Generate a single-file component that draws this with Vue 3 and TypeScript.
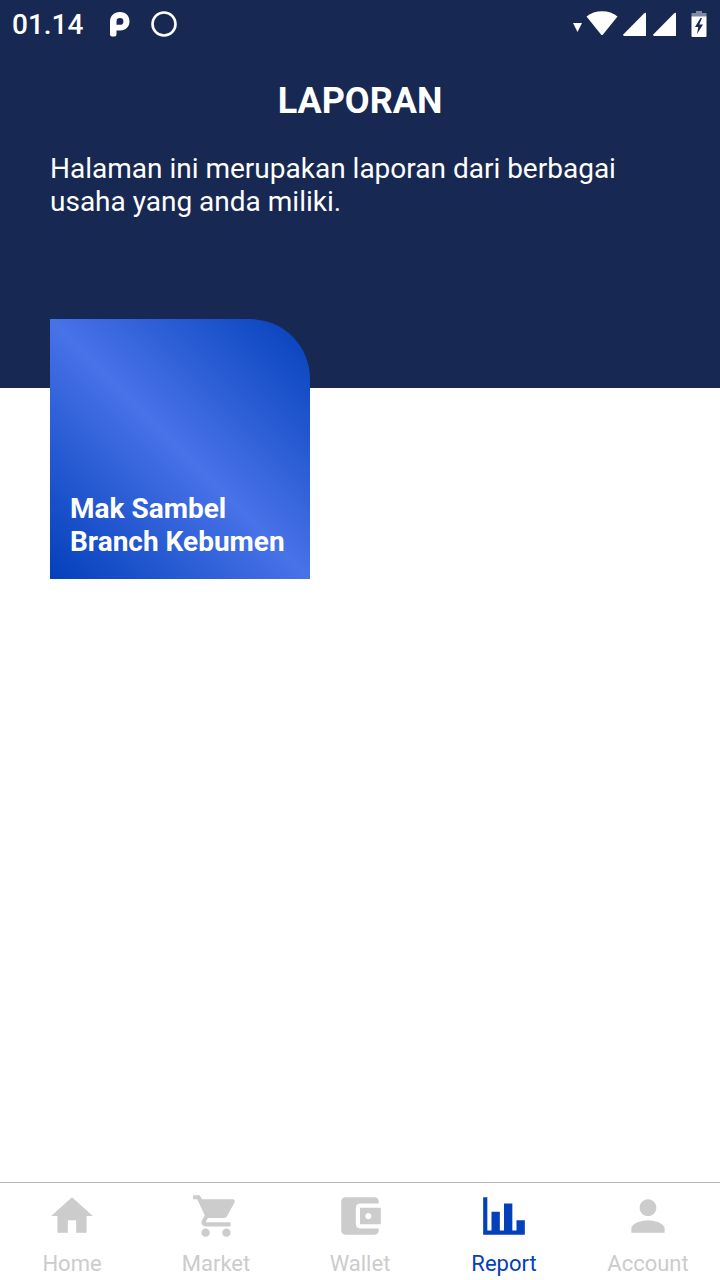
<script setup lang="ts">
interface Tab {
  label: string
  href: string
  icon: string
  active?: boolean
}

interface Business {
  name: string
  branch: string
}

const businesses: Business[] = [{ name: 'Mak Sambel', branch: 'Branch Kebumen' }]

const tabs: Tab[] = [
  { label: 'Home', href: '#home', icon: 'M10 20v-6h4v6h5v-8h3L12 3 2 12h3v8z' },
  {
    label: 'Market',
    href: '#market',
    icon: 'M7 18c-1.1 0-1.99.9-1.99 2S5.9 22 7 22s2-.9 2-2-.9-2-2-2zM1 2v2h2l3.6 7.59-1.35 2.45c-.16.28-.25.61-.25.96 0 1.1.9 2 2 2h12v-2H7.42c-.14 0-.25-.11-.25-.25l.03-.12.9-1.63h7.45c.75 0 1.41-.41 1.75-1.03l3.58-6.49c.08-.14.12-.31.12-.48 0-.55-.45-1-1-1H5.21l-.94-2H1zm16 16c-1.1 0-1.99.9-1.99 2s.89 2 1.99 2 2-.9 2-2-.9-2-2-2z',
  },
  {
    label: 'Wallet',
    href: '#wallet',
    icon: 'M21 18v1c0 1.1-.9 2-2 2H5c-1.11 0-2-.9-2-2V5c0-1.1.89-2 2-2h14c1.1 0 2 .9 2 2v1h-9c-1.11 0-2 .9-2 2v8c0 1.1.89 2 2 2h9zm-9-2h10V8H12v8zm4-2.5c-.83 0-1.5-.67-1.5-1.5s.67-1.5 1.5-1.5 1.5.67 1.5 1.5-.67 1.5-1.5 1.5z',
  },
  {
    label: 'Report',
    href: '#report',
    icon: 'M22 21H2V3h2v16h2v-9h4v9h2V6h4v13h2v-5h4v7z',
    active: true,
  },
  {
    label: 'Account',
    href: '#account',
    icon: 'M12 12c2.21 0 4-1.79 4-4s-1.79-4-4-4-4 1.79-4 4 1.79 4 4 4zm0 2c-2.67 0-8 1.34-8 4v2h16v-2c0-2.66-5.33-4-8-4z',
  },
]
</script>

<template>
  <div class="page">
    <header class="header">
      <div class="status">
        <div class="status-left">
          <time class="clock" datetime="01:14">01.14</time>
          <svg class="notice" width="20" height="26" viewBox="0 -1 20 26" aria-hidden="true">
            <path
              fill="#fff"
              fill-rule="evenodd"
              d="M10 0C4 0 0 4 0 9.500V22.500Q0 24.500 2 24.500H4.500Q6.500 24.500 6.500 22.500V18.500H10C16 18.500 19.500 14.500 19.500 9.300S16 0 10 0zM10 6a3.400 3.400 0 1 1 0 6.800H6.500V9.400A3.400 3.400 0 0 1 10 6z"
            />
          </svg>
          <svg width="26" height="26" viewBox="0 0 26 26" aria-hidden="true">
            <circle cx="13" cy="13" r="11.500" fill="none" stroke="#fff" stroke-width="2.600" />
          </svg>
        </div>
        <div class="status-right">
          <svg width="134" height="28" viewBox="0 0 134 28" fill="#fff" aria-hidden="true">
            <path d="M0 13h9l-4.500 9z" />
            <path d="M13.500 6.500Q20 1.200 29 1.200T44.500 6.500L30 24.500Q29 25.500 28 24.500z" />
            <path d="M73 3v23H51q-1.500-.500-.500-1.700L71 3.600Q72.500 2.300 73 3z" />
            <path d="M103 3v23H81q-1.500-.500-.500-1.700L101 3.600Q102.500 2.300 103 3z" />
            <path opacity=".45" d="M123 1h6v2h4.500v4h-15V3h4.500z" />
            <path
              fill-rule="evenodd"
              d="M118.500 6.500h15V26q0 1-1 1h-13q-1 0-1-1zM127.500 8l-5.500 9h3.300l-1.300 7 6-9.500h-3.700l2.700-6.500z"
            />
          </svg>
        </div>
      </div>
      <h1 class="title">LAPORAN</h1>
      <p class="intro">Halaman ini merupakan laporan dari berbagai usaha yang anda miliki.</p>
    </header>

    <main class="cards">
      <button v-for="item in businesses" :key="item.branch" type="button" class="card">
        <span>{{ item.name }}</span>
        <span>{{ item.branch }}</span>
      </button>
    </main>

    <nav class="tabs" aria-label="Main">
      <a
        v-for="tab in tabs"
        :key="tab.label"
        :href="tab.href"
        class="tab"
        :class="{ active: tab.active }"
        :aria-current="tab.active ? 'page' : undefined"
      >
        <svg width="50" height="50" viewBox="0 0 24 24" fill="currentColor" aria-hidden="true">
          <path :d="tab.icon" />
        </svg>
        <span>{{ tab.label }}</span>
      </a>
    </nav>
  </div>
</template>

<style>
body {
  margin: 0;
  background: #fff;
}
</style>

<style scoped>
.page {
  min-height: 100vh;
  display: flex;
  flex-direction: column;
  font-family: Roboto, 'Liberation Sans', sans-serif;
}

.header {
  background: #172852;
  color: #fff;
  padding-bottom: 170px;
}

.status {
  height: 48px;
  padding: 0 13px 0 12px;
  display: flex;
  align-items: center;
  justify-content: space-between;
}

.status-left {
  display: flex;
  align-items: center;
}

.status-right {
  display: flex;
}

.clock {
  padding-top: 2px;
  font-size: 28px;
  line-height: 32px;
  font-weight: 500;
}

.notice {
  margin: 0 21px 0 27px;
}

.title {
  margin: 32px 0 0;
  font-size: 36px;
  line-height: 42px;
  font-weight: 700;
  text-align: center;
}

.intro {
  margin: 30px 50px 0;
  font-size: 28px;
  line-height: 33px;
}

.cards {
  flex: 1;
  display: flex;
  flex-wrap: wrap;
  align-content: flex-start;
  gap: 50px;
  margin-top: -69px;
  padding: 0 50px 50px;
}

.card {
  width: 260px;
  height: 260px;
  padding: 20px 20px 21px;
  border: 0;
  border-radius: 0 60px 0 0;
  background: linear-gradient(45deg, #0340ba, #4872e8 50%, #0340ba);
  color: #fff;
  display: flex;
  flex-direction: column;
  align-items: flex-start;
  justify-content: flex-end;
  font: inherit;
  font-size: 28px;
  line-height: 33px;
  font-weight: 700;
  text-align: left;
  white-space: nowrap;
  cursor: pointer;
}

.tabs {
  display: flex;
  border-top: 1px solid #b8b8b8;
  background: #fff;
}

.tab {
  flex: 1 1 0;
  min-width: 0;
  padding: 8px 0 3px;
  display: flex;
  flex-direction: column;
  align-items: center;
  gap: 10px;
  color: #ccc;
  font-size: 22px;
  line-height: 26px;
  text-decoration: none;
}

.tab svg {
  display: block;
}

.tab.active {
  color: #0340ba;
}
</style>
